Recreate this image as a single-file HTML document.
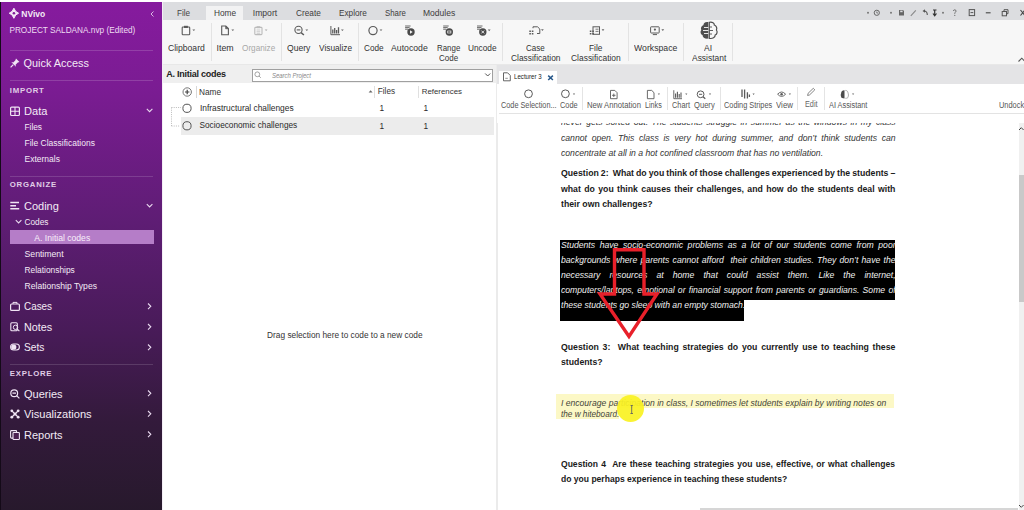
<!DOCTYPE html><html><head><meta charset="utf-8"><style>
html,body{margin:0;padding:0;width:1024px;height:510px;overflow:hidden;background:#fff;font-family:"Liberation Sans", sans-serif;}
.t{position:absolute;white-space:pre;line-height:normal;}
.r{position:absolute;}
svg.ov{position:absolute;left:0;top:0;}
</style></head><body>
<div class="r" style="left:0px;top:0px;width:1024px;height:2px;background:#ffffff;"></div>
<div class="r" style="left:0px;top:2px;width:163px;height:508px;background:linear-gradient(180deg,#861b9e 0px,#7a1c92 90px,#5e1d74 220px,#481b58 330px,#331a3b 420px,#27192c 510px);"></div>
<div class="r" style="left:0px;top:2px;width:1px;height:508px;background:#140a18;"></div>
<div class="r" style="left:162px;top:2px;width:1px;height:508px;background:#f4eef6;"></div>
<div class="t" style="left:21.30px;top:8.61px;font-size:8.5px;color:#f3eaf5;font-weight:bold;font-style:normal;">NVivo</div>
<div class="t" style="left:9.40px;top:26.23px;font-size:8.25px;color:#eedcf2;font-weight:normal;font-style:normal;">PROJECT SALDANA.nvp (Edited)</div>
<div class="r" style="left:10px;top:50px;width:143px;height:1px;background:rgba(255,255,255,0.16);"></div>
<div class="t" style="left:23.50px;top:57.04px;font-size:10.9px;color:#f3eaf5;font-weight:normal;font-style:normal;">Quick Access</div>
<div class="r" style="left:10px;top:80px;width:143px;height:1px;background:rgba(255,255,255,0.16);"></div>
<div class="t" style="left:9.80px;top:85.94px;font-size:7.8px;color:#e0cde6;font-weight:bold;font-style:normal;letter-spacing:0.75px;">IMPORT</div>
<div class="t" style="left:24.00px;top:105.15px;font-size:11.1px;color:#f3eaf5;font-weight:normal;font-style:normal;">Data</div>
<div class="t" style="left:24.50px;top:122.09px;font-size:8.3px;color:#f3eaf5;font-weight:normal;font-style:normal;">Files</div>
<div class="t" style="left:24.50px;top:137.91px;font-size:8.5px;color:#f3eaf5;font-weight:normal;font-style:normal;">File Classifications</div>
<div class="t" style="left:24.50px;top:153.91px;font-size:8.5px;color:#f3eaf5;font-weight:normal;font-style:normal;">Externals</div>
<div class="r" style="left:10px;top:176px;width:143px;height:1px;background:rgba(255,255,255,0.15);"></div>
<div class="t" style="left:9.80px;top:180.44px;font-size:7.8px;color:#e0cde6;font-weight:bold;font-style:normal;letter-spacing:0.75px;">ORGANIZE</div>
<div class="t" style="left:24.00px;top:199.74px;font-size:11.0px;color:#f3eaf5;font-weight:normal;font-style:normal;">Coding</div>
<div class="t" style="left:24.50px;top:216.99px;font-size:8.3px;color:#f3eaf5;font-weight:normal;font-style:normal;">Codes</div>
<div class="r" style="left:10px;top:230px;width:144px;height:14px;background:#b57dc8;"></div>
<div class="t" style="left:34.30px;top:233.12px;font-size:8.6px;color:#f8f0fa;font-weight:normal;font-style:normal;">A. Initial codes</div>
<div class="t" style="left:24.50px;top:248.73px;font-size:8.7px;color:#f3eaf5;font-weight:normal;font-style:normal;">Sentiment</div>
<div class="t" style="left:24.50px;top:265.20px;font-size:8.4px;color:#f3eaf5;font-weight:normal;font-style:normal;">Relationships</div>
<div class="t" style="left:24.50px;top:280.82px;font-size:8.6px;color:#f3eaf5;font-weight:normal;font-style:normal;">Relationship Types</div>
<div class="t" style="left:24.00px;top:300.35px;font-size:11.0px;color:#f3eaf5;font-weight:normal;font-style:normal;transform:scaleX(0.898);transform-origin:0 0;">Cases</div>
<div class="t" style="left:24.00px;top:321.13px;font-size:10.8px;color:#f3eaf5;font-weight:normal;font-style:normal;">Notes</div>
<div class="t" style="left:23.50px;top:341.15px;font-size:11.0px;color:#f3eaf5;font-weight:normal;font-style:normal;transform:scaleX(0.93);transform-origin:0 0;">Sets</div>
<div class="r" style="left:10px;top:364px;width:143px;height:1px;background:rgba(255,255,255,0.14);"></div>
<div class="t" style="left:9.80px;top:368.74px;font-size:7.8px;color:#e0cde6;font-weight:bold;font-style:normal;letter-spacing:0.75px;">EXPLORE</div>
<div class="t" style="left:24.00px;top:387.75px;font-size:11.0px;color:#f3eaf5;font-weight:normal;font-style:normal;">Queries</div>
<div class="t" style="left:24.00px;top:408.25px;font-size:11.1px;color:#f3eaf5;font-weight:normal;font-style:normal;">Visualizations</div>
<div class="t" style="left:24.00px;top:428.94px;font-size:11.0px;color:#f3eaf5;font-weight:normal;font-style:normal;">Reports</div>
<div class="r" style="left:163px;top:2px;width:861px;height:17.8px;background:#dcdde0;"></div>
<div class="r" style="left:206px;top:6px;width:37px;height:14px;background:#f2f2f3;"></div>
<div class="t" style="left:177.20px;top:7.82px;font-size:8.6px;color:#444;font-weight:normal;font-style:normal;transform:scaleX(0.95);transform-origin:0 0;">File</div>
<div class="t" style="left:213.70px;top:8.12px;font-size:8.6px;color:#3c3c3c;font-weight:normal;font-style:normal;transform:scaleX(0.965);transform-origin:0 0;">Home</div>
<div class="t" style="left:252.80px;top:8.12px;font-size:8.6px;color:#3c3c3c;font-weight:normal;font-style:normal;">Import</div>
<div class="t" style="left:295.70px;top:8.12px;font-size:8.6px;color:#3c3c3c;font-weight:normal;font-style:normal;transform:scaleX(0.96);transform-origin:0 0;">Create</div>
<div class="t" style="left:338.70px;top:8.12px;font-size:8.6px;color:#3c3c3c;font-weight:normal;font-style:normal;transform:scaleX(0.957);transform-origin:0 0;">Explore</div>
<div class="t" style="left:384.80px;top:8.12px;font-size:8.6px;color:#3c3c3c;font-weight:normal;font-style:normal;transform:scaleX(0.91);transform-origin:0 0;">Share</div>
<div class="t" style="left:423.20px;top:8.12px;font-size:8.6px;color:#3c3c3c;font-weight:normal;font-style:normal;transform:scaleX(0.994);transform-origin:0 0;">Modules</div>
<div class="r" style="left:163px;top:20px;width:861px;height:43.5px;background:#f7f7f7;"></div>
<div class="r" style="left:163px;top:63.5px;width:861px;height:1.5px;background:#e8e8e8;"></div>
<div class="r" style="left:210.5px;top:23px;width:1px;height:37.5px;background:#e3e3e3;"></div>
<div class="r" style="left:280.5px;top:23px;width:1px;height:37.5px;background:#e3e3e3;"></div>
<div class="r" style="left:357.8px;top:23px;width:1px;height:37.5px;background:#e3e3e3;"></div>
<div class="r" style="left:502.4px;top:23px;width:1px;height:37.5px;background:#e3e3e3;"></div>
<div class="r" style="left:627.6px;top:23px;width:1px;height:37.5px;background:#e3e3e3;"></div>
<div class="r" style="left:683px;top:23px;width:1px;height:37.5px;background:#e3e3e3;"></div>
<div class="r" style="left:732px;top:23px;width:1px;height:37.5px;background:#e3e3e3;"></div>
<div class="t" style="left:168.20px;top:42.74px;font-size:8.8px;color:#333;font-weight:normal;font-style:normal;transform:scaleX(0.9773);transform-origin:0 0;">Clipboard</div>
<div class="t" style="left:216.60px;top:42.74px;font-size:8.8px;color:#333;font-weight:normal;font-style:normal;">Item</div>
<div class="t" style="left:242.00px;top:42.74px;font-size:8.8px;color:#a8a8a8;font-weight:normal;font-style:normal;transform:scaleX(0.9318);transform-origin:0 0;">Organize</div>
<div class="t" style="left:287.30px;top:42.74px;font-size:8.8px;color:#333;font-weight:normal;font-style:normal;transform:scaleX(0.9773);transform-origin:0 0;">Query</div>
<div class="t" style="left:319.20px;top:42.74px;font-size:8.8px;color:#333;font-weight:normal;font-style:normal;transform:scaleX(0.9432);transform-origin:0 0;">Visualize</div>
<div class="t" style="left:363.70px;top:42.74px;font-size:8.8px;color:#333;font-weight:normal;font-style:normal;transform:scaleX(0.9318);transform-origin:0 0;">Code</div>
<div class="t" style="left:391.40px;top:42.74px;font-size:8.8px;color:#333;font-weight:normal;font-style:normal;transform:scaleX(0.9886);transform-origin:0 0;">Autocode</div>
<div class="t" style="left:436.90px;top:42.74px;font-size:8.8px;color:#333;font-weight:normal;font-style:normal;transform:scaleX(0.8977);transform-origin:0 0;">Range</div>
<div class="t" style="left:439.00px;top:52.64px;font-size:8.8px;color:#333;font-weight:normal;font-style:normal;transform:scaleX(0.9091);transform-origin:0 0;">Code</div>
<div class="t" style="left:468.20px;top:42.74px;font-size:8.8px;color:#333;font-weight:normal;font-style:normal;transform:scaleX(0.9432);transform-origin:0 0;">Uncode</div>
<div class="t" style="left:525.60px;top:42.74px;font-size:8.8px;color:#333;font-weight:normal;font-style:normal;transform:scaleX(0.9091);transform-origin:0 0;">Case</div>
<div class="t" style="left:511.00px;top:52.64px;font-size:8.8px;color:#333;font-weight:normal;font-style:normal;transform:scaleX(0.9545);transform-origin:0 0;">Classification</div>
<div class="t" style="left:589.00px;top:42.74px;font-size:8.8px;color:#333;font-weight:normal;font-style:normal;transform:scaleX(0.9432);transform-origin:0 0;">File</div>
<div class="t" style="left:571.30px;top:52.64px;font-size:8.8px;color:#333;font-weight:normal;font-style:normal;transform:scaleX(0.9602);transform-origin:0 0;">Classification</div>
<div class="t" style="left:634.30px;top:42.74px;font-size:8.8px;color:#333;font-weight:normal;font-style:normal;transform:scaleX(0.9886);transform-origin:0 0;">Workspace</div>
<div class="t" style="left:704.00px;top:42.74px;font-size:8.8px;color:#333;font-weight:normal;font-style:normal;transform:scaleX(0.9659);transform-origin:0 0;">AI</div>
<div class="t" style="left:691.60px;top:52.64px;font-size:8.8px;color:#333;font-weight:normal;font-style:normal;transform:scaleX(0.9602);transform-origin:0 0;">Assistant</div>
<div class="r" style="left:163px;top:65px;width:333px;height:445px;background:#ffffff;"></div>
<div class="r" style="left:163px;top:65px;width:333px;height:18px;background:#efefef;"></div>
<div class="t" style="left:166.20px;top:68.86px;font-size:9.0px;color:#222;font-weight:bold;font-style:normal;letter-spacing:-0.25px;">A. Initial codes</div>
<div class="r" style="left:251.5px;top:68.5px;width:241px;height:13px;background:#fff;border:1px solid #a0a0a0;box-sizing:border-box;"></div>
<div class="t" style="left:271.60px;top:72.23px;font-size:6.6px;color:#888;font-weight:normal;font-style:italic;transform:scaleX(0.9);transform-origin:0 0;">Search Project</div>
<div class="r" style="left:196px;top:85.5px;width:1px;height:12.5px;background:#d8d8d8;"></div>
<div class="t" style="left:199.00px;top:87.09px;font-size:8.3px;color:#333;font-weight:normal;font-style:normal;">Name</div>
<div class="r" style="left:374.3px;top:85.5px;width:1px;height:12.5px;background:#e0e0e0;"></div>
<div class="t" style="left:377.80px;top:87.18px;font-size:8.2px;color:#333;font-weight:normal;font-style:normal;">Files</div>
<div class="r" style="left:418.2px;top:85.5px;width:1px;height:12.5px;background:#e0e0e0;"></div>
<div class="t" style="left:421.70px;top:87.45px;font-size:7.9px;color:#333;font-weight:normal;font-style:normal;">References</div>
<div class="t" style="left:200.00px;top:103.20px;font-size:8.4px;color:#2a2a2a;font-weight:normal;font-style:normal;">Infrastructural challenges</div>
<div class="t" style="left:379.50px;top:103.29px;font-size:8.3px;color:#2a2a2a;font-weight:normal;font-style:normal;">1</div>
<div class="t" style="left:423.50px;top:103.29px;font-size:8.3px;color:#2a2a2a;font-weight:normal;font-style:normal;">1</div>
<div class="r" style="left:180.7px;top:117px;width:313px;height:17.5px;background:#ececec;"></div>
<div class="t" style="left:199.50px;top:121.43px;font-size:8.25px;color:#2a2a2a;font-weight:normal;font-style:normal;">Socioeconomic challenges</div>
<div class="t" style="left:379.50px;top:121.39px;font-size:8.3px;color:#2a2a2a;font-weight:normal;font-style:normal;">1</div>
<div class="t" style="left:423.50px;top:121.39px;font-size:8.3px;color:#2a2a2a;font-weight:normal;font-style:normal;">1</div>
<div class="t" style="left:267.10px;top:329.79px;font-size:8.3px;color:#333;font-weight:normal;font-style:normal;">Drag selection here to code to a new code</div>
<div class="r" style="left:495.6px;top:65px;width:2.6px;height:445px;background:#ebebeb;"></div>
<div class="r" style="left:497px;top:65px;width:527px;height:18.6px;background:#e4e4e6;"></div>
<div class="r" style="left:499px;top:70.5px;width:58px;height:13.1px;background:#ffffff;"></div>
<div class="t" style="left:514.10px;top:72.66px;font-size:6.9px;color:#1a1a1a;font-weight:normal;font-style:normal;transform:scaleX(0.89);transform-origin:0 0;">Lecturer 3</div>
<div class="r" style="left:497px;top:83.6px;width:527px;height:30px;background:#ffffff;"></div>
<div class="r" style="left:582px;top:86.5px;width:1px;height:23px;background:#e4e4e4;"></div>
<div class="r" style="left:667.2px;top:86.5px;width:1px;height:23px;background:#e4e4e4;"></div>
<div class="r" style="left:719.6px;top:86.5px;width:1px;height:23px;background:#e4e4e4;"></div>
<div class="r" style="left:797.4px;top:86.5px;width:1px;height:23px;background:#e4e4e4;"></div>
<div class="r" style="left:824.4px;top:86.5px;width:1px;height:23px;background:#e4e4e4;"></div>
<div class="r" style="left:499px;top:113.3px;width:525px;height:1px;background:#e3e3e3;"></div>
<div class="t" style="left:500.90px;top:100.49px;font-size:8.3px;color:#555;font-weight:normal;font-style:normal;transform:scaleX(0.8795);transform-origin:0 0;">Code Selection...</div>
<div class="t" style="left:560.40px;top:100.49px;font-size:8.3px;color:#555;font-weight:normal;font-style:normal;transform:scaleX(0.8916);transform-origin:0 0;">Code</div>
<div class="t" style="left:586.80px;top:100.49px;font-size:8.3px;color:#555;font-weight:normal;font-style:normal;transform:scaleX(0.9277);transform-origin:0 0;">New Annotation</div>
<div class="t" style="left:645.40px;top:100.49px;font-size:8.3px;color:#555;font-weight:normal;font-style:normal;transform:scaleX(0.8675);transform-origin:0 0;">Links</div>
<div class="t" style="left:671.80px;top:100.49px;font-size:8.3px;color:#555;font-weight:normal;font-style:normal;transform:scaleX(0.8916);transform-origin:0 0;">Chart</div>
<div class="t" style="left:694.00px;top:100.49px;font-size:8.3px;color:#555;font-weight:normal;font-style:normal;transform:scaleX(0.9157);transform-origin:0 0;">Query</div>
<div class="t" style="left:724.00px;top:100.49px;font-size:8.3px;color:#555;font-weight:normal;font-style:normal;transform:scaleX(0.8855);transform-origin:0 0;">Coding Stripes</div>
<div class="t" style="left:776.00px;top:100.49px;font-size:8.3px;color:#555;font-weight:normal;font-style:normal;transform:scaleX(0.9518);transform-origin:0 0;">View</div>
<div class="t" style="left:804.60px;top:99.29px;font-size:8.3px;color:#666;font-weight:normal;font-style:normal;transform:scaleX(0.8795);transform-origin:0 0;">Edit</div>
<div class="t" style="left:828.80px;top:100.49px;font-size:8.3px;color:#555;font-weight:normal;font-style:normal;transform:scaleX(0.8855);transform-origin:0 0;">AI Assistant</div>
<div class="t" style="left:998.80px;top:100.49px;font-size:8.3px;color:#555;font-weight:normal;font-style:normal;transform:scaleX(0.8916);transform-origin:0 0;">Undock</div>
<div class="t" style="left:560.50px;top:116.31px;font-size:9.6px;color:#333333;font-weight:normal;font-style:italic;transform:scaleX(0.9);transform-origin:0 0;word-spacing:1.302px;">never gets sorted out. The students struggle in summer as the windows in my class</div>
<div class="r" style="left:497px;top:113.8px;width:521px;height:9.2px;background:#ffffff;"></div>
<div class="r" style="left:499px;top:113.3px;width:519px;height:1px;background:#e3e3e3;"></div>
<div class="t" style="left:560.50px;top:131.51px;font-size:9.6px;color:#333333;font-weight:normal;font-style:italic;transform:scaleX(0.9);transform-origin:0 0;word-spacing:2.591px;">cannot open. This class is very hot during summer, and don’t think students can</div>
<div class="t" style="left:560.50px;top:146.51px;font-size:9.6px;color:#333333;font-weight:normal;font-style:italic;transform:scaleX(0.9);transform-origin:0 0;">concentrate at all in a hot confined classroom that has no ventilation.</div>
<div class="t" style="left:560.50px;top:167.22px;font-size:9.7px;color:#1a1a1a;font-weight:bold;font-style:normal;transform:scaleX(0.9);transform-origin:0 0;word-spacing:-0.416px;">Question 2:  What do you think of those challenges experienced by the students –</div>
<div class="t" style="left:560.50px;top:182.52px;font-size:9.7px;color:#1a1a1a;font-weight:bold;font-style:normal;transform:scaleX(0.9);transform-origin:0 0;word-spacing:1.045px;">what do you think causes their challenges, and how do the students deal with</div>
<div class="t" style="left:560.50px;top:197.72px;font-size:9.7px;color:#1a1a1a;font-weight:bold;font-style:normal;transform:scaleX(0.9);transform-origin:0 0;">their own challenges?</div>
<div class="r" style="left:560.2px;top:240.2px;width:335px;height:60.2px;background:#000;"></div>
<div class="r" style="left:560.2px;top:300px;width:183.7px;height:20.6px;background:#000;"></div>
<div class="t" style="left:560.50px;top:239.31px;font-size:9.6px;color:#f0f0f0;font-weight:normal;font-style:italic;transform:scaleX(0.9);transform-origin:0 0;word-spacing:2.452px;">Students have socio-economic problems as a lot of our students come from poor</div>
<div class="t" style="left:560.50px;top:254.31px;font-size:9.6px;color:#f0f0f0;font-weight:normal;font-style:italic;transform:scaleX(0.9);transform-origin:0 0;word-spacing:0.981px;">backgrounds where parents cannot afford  their children studies. They don’t have the</div>
<div class="t" style="left:560.50px;top:269.31px;font-size:9.6px;color:#f0f0f0;font-weight:normal;font-style:italic;transform:scaleX(0.9);transform-origin:0 0;word-spacing:7.425px;">necessary resources at home that could assist them. Like the internet,</div>
<div class="t" style="left:560.50px;top:284.01px;font-size:9.6px;color:#f0f0f0;font-weight:normal;font-style:italic;transform:scaleX(0.9);transform-origin:0 0;word-spacing:0.914px;">computers/laptops, emotional or financial support from parents or guardians. Some of</div>
<div class="t" style="left:560.50px;top:299.11px;font-size:9.6px;color:#f0f0f0;font-weight:normal;font-style:italic;transform:scaleX(0.9);transform-origin:0 0;">these students go sleep with an empty stomach.</div>
<div class="t" style="left:560.50px;top:341.22px;font-size:9.7px;color:#1a1a1a;font-weight:bold;font-style:normal;transform:scaleX(0.9);transform-origin:0 0;word-spacing:1.490px;">Question 3:  What teaching strategies do you currently use to teaching these</div>
<div class="t" style="left:560.50px;top:356.22px;font-size:9.7px;color:#1a1a1a;font-weight:bold;font-style:normal;transform:scaleX(0.9);transform-origin:0 0;">students?</div>
<div class="r" style="left:556px;top:394.4px;width:337.6px;height:13.8px;background:#fcf8c6;"></div>
<div class="r" style="left:556px;top:408px;width:62.6px;height:11.2px;background:#fcf8c6;"></div>
<div class="t" style="left:560.80px;top:398.36px;font-size:9.1px;color:#45453a;font-weight:normal;font-style:italic;transform:scaleX(0.942);transform-origin:0 0;">I encourage participation in class, I sometimes let students explain by writing notes on</div>
<div class="t" style="left:560.80px;top:408.76px;font-size:9.1px;color:#45453a;font-weight:normal;font-style:italic;transform:scaleX(0.9);transform-origin:0 0;">the w hiteboard.</div>
<div class="t" style="left:560.50px;top:457.80px;font-size:9.5px;color:#1a1a1a;font-weight:bold;font-style:normal;transform:scaleX(0.9);transform-origin:0 0;word-spacing:0.950px;">Question 4  Are these teaching strategies you use, effective, or what challenges</div>
<div class="t" style="left:560.50px;top:473.30px;font-size:9.5px;color:#1a1a1a;font-weight:bold;font-style:normal;transform:scaleX(0.9);transform-origin:0 0;">do you perhaps experience in teaching these students?</div>
<div class="r" style="left:1018.5px;top:123.3px;width:5.5px;height:386.7px;background:#f0f0f0;"></div>
<div class="r" style="left:1018.5px;top:175px;width:5.5px;height:127.2px;background:#c9c9c9;"></div>
<div class="r" style="left:700px;top:508px;width:318px;height:2px;background:#d6d6d6;"></div>
<svg class="ov" width="1024" height="510" viewBox="0 0 1024 510"><path d="M13.9 8.2 L15.7 11.4 L18.6 13.2 L15.7 15 L13.9 18.3 L12.1 15 L9.2 13.2 L12.1 11.4 Z" fill="#f3e6f6" stroke="#f3e6f6" stroke-width="1" stroke-linejoin="round"/><circle cx="13.9" cy="13.2" r="1.3" fill="#801b98"/><path d="M153.5 11.5 L151 14 L153.5 16.5" fill="none" stroke="#d9b8e2" stroke-width="1"/><path d="M16 58.5 L19.5 62 L17.8 62.6 L15.6 64.8 L15.9 66.7 L11.3 62.1 L13.2 62.4 L15.4 60.2 Z" fill="#f0e4f4"/><path d="M13.3 64.7 L10.6 67.4" stroke="#f0e4f4" stroke-width="1.2"/><rect x="10.6" y="107.1" width="8.8" height="8.4" rx="1" fill="none" stroke="#f0e4f4" stroke-width="1.2"/><path d="M10.6 111.3 H19.4 M15 107.1 V115.5" stroke="#f0e4f4" stroke-width="1.1"/><path d="M146.8 108.8 L149.60000000000002 111.6 L152.4 108.8" fill="none" stroke="#e8d8ee" stroke-width="1.1"/><path d="M10.3 202.6 H19 M10.3 205.7 H16 M10.3 208.8 H19.2" stroke="#f0e4f4" stroke-width="1.5"/><path d="M146.8 204.2 L149.60000000000002 207.0 L152.4 204.2" fill="none" stroke="#e8d8ee" stroke-width="1.1"/><path d="M15.8 220.2 L18.6 223.0 L21.4 220.2" fill="none" stroke="#e8d8ee" stroke-width="1.1"/><rect x="10.6" y="304" width="8.8" height="6.4" rx="1" fill="none" stroke="#f0e4f4" stroke-width="1.2"/><path d="M13 304 V302.4 H17 V304" fill="none" stroke="#f0e4f4" stroke-width="1"/><path d="M148 303.5 L150.8 306.3 L148 309.1" fill="none" stroke="#e8d8ee" stroke-width="1.1"/><rect x="10.8" y="322.8" width="6.5" height="8" rx="1" fill="none" stroke="#f0e4f4" stroke-width="1.1"/><circle cx="15.5" cy="327.3" r="2.2" fill="none" stroke="#f0e4f4" stroke-width="1"/><path d="M17 328.8 L19.4 331.2" stroke="#f0e4f4" stroke-width="1.1"/><path d="M148 324 L150.8 326.8 L148 329.6" fill="none" stroke="#e8d8ee" stroke-width="1.1"/><rect x="10.6" y="344" width="8.8" height="6" rx="3" fill="none" stroke="#f0e4f4" stroke-width="1.1"/><circle cx="13.8" cy="347" r="2.6" fill="#f0e4f4"/><path d="M148 344.5 L150.8 347.3 L148 350.1" fill="none" stroke="#e8d8ee" stroke-width="1.1"/><circle cx="14.2" cy="393.2" r="3.4" fill="none" stroke="#f0e4f4" stroke-width="1.2"/><path d="M12.4 393.2 H16 M16.8 395.8 L19.4 398.4" stroke="#f0e4f4" stroke-width="1.2"/><path d="M148 390.5 L150.8 393.3 L148 396.1" fill="none" stroke="#e8d8ee" stroke-width="1.1"/><path d="M12 411 L18 417 M18 411 L12 417" stroke="#f0e4f4" stroke-width="1.2"/><circle cx="11.8" cy="410.8" r="1.4" fill="#f0e4f4"/><circle cx="18.2" cy="410.8" r="1.4" fill="#f0e4f4"/><circle cx="11.8" cy="417.2" r="1.4" fill="#f0e4f4"/><circle cx="18.2" cy="417.2" r="1.4" fill="#f0e4f4"/><circle cx="15" cy="414" r="1.5" fill="#f0e4f4"/><path d="M148 411 L150.8 413.8 L148 416.6" fill="none" stroke="#e8d8ee" stroke-width="1.1"/><rect x="10.6" y="430.6" width="6" height="7.5" rx="0.8" fill="none" stroke="#f0e4f4" stroke-width="1.1"/><rect x="13" y="432.5" width="6.4" height="7" rx="0.8" fill="#4a2050" stroke="#f0e4f4" stroke-width="1.1"/><path d="M148 431.5 L150.8 434.3 L148 437.1" fill="none" stroke="#e8d8ee" stroke-width="1.1"/><circle cx="868" cy="12.8" r="1" fill="#777"/><circle cx="876.8" cy="12.8" r="2.6" fill="none" stroke="#666" stroke-width="1"/><path d="M876.8 11.5 V13 H878" stroke="#666" stroke-width="0.8" fill="none"/><circle cx="891" cy="12.8" r="1" fill="#777"/><path d="M899 10 H903 L904 11 V15.5 H899 Z" fill="#666"/><rect x="900.2" y="10.6" width="2.4" height="1.6" fill="#dcdde0"/><path d="M910.8 15.8 L915.8 10.3" stroke="#888" stroke-width="1.1"/><path d="M922.5 11 L925 9.2 V12.8 Z" fill="#555"/><path d="M924 11 Q927.3 11 927.3 15" stroke="#555" stroke-width="1.1" fill="none"/><path d="M933 10 H936.5 M934.7 10 V15.5 M933 13.5 L934.7 15.8 L936.5 13.5" stroke="#333" stroke-width="1.2" fill="none"/><circle cx="943" cy="12.8" r="1" fill="#777"/><path d="M953.3 11 Q953.6 9.8 954.8 9.8 Q956.2 9.9 956 11.3 Q955.7 12.3 954.8 12.7 V13.8" stroke="#666" stroke-width="0.9" fill="none"/><circle cx="954.8" cy="15.4" r="0.55" fill="#666"/><rect x="969.2" y="9.6" width="5.4" height="6" fill="none" stroke="#555" stroke-width="1"/><path d="M970.5 12.6 H973.3" stroke="#555" stroke-width="1"/><path d="M985.8 12.8 H990.6" stroke="#444" stroke-width="1.1"/><rect x="1002.2" y="11.5" width="4.3" height="4.3" fill="none" stroke="#555" stroke-width="1"/><path d="M1004 11.5 V9.7 H1008 V13.7 H1006.5" fill="none" stroke="#555" stroke-width="1"/><path d="M1020.5 10 L1025 15.5 M1025 10 L1020.5 15.5" stroke="#444" stroke-width="1.1"/><rect x="182.2" y="27" width="7.5" height="7.7" rx="0.8" stroke="#5a5a5a" stroke-width="1.1" fill="none"/><rect x="184" y="25.8" width="3.9" height="2.2" fill="#5a5a5a"/><path d="M192.4 29.4 h2.8 l-1.4 1.7 z" fill="#666"/><path d="M221.7 26 H225.8 L228.4 28.6 V34.7 H221.7 Z" stroke="#5a5a5a" stroke-width="1.1" fill="none"/><path d="M225.6 26.1 V28.8 H228.3" fill="#5a5a5a" stroke="#5a5a5a" stroke-width="0.6"/><path d="M231.4 29.4 h2.8 l-1.4 1.7 z" fill="#666"/><rect x="254.8" y="27.4" width="7.2" height="7.2" rx="0.8" stroke="#bbb" stroke-width="1.1" fill="none"/><rect x="256.6" y="26.2" width="3.6" height="2" fill="#bbb"/><path d="M256.6 30 H260.2 M256.6 31.7 H260.2 M256.6 33.3 H260.2" stroke="#bbb" stroke-width="0.7"/><path d="M264.7 29.4 h2.8 l-1.4 1.7 z" fill="#aaa"/><circle cx="298.5" cy="29.9" r="3.6" stroke="#5a5a5a" stroke-width="1.1" fill="none"/><path d="M296.7 29.9 H300.3" stroke="#5a5a5a" stroke-width="1.1" fill="none"/><path d="M301.1 32.6 L303.9 35" stroke="#5a5a5a" stroke-width="1.4"/><path d="M305.4 29.4 h2.8 l-1.4 1.7 z" fill="#666"/><path d="M330.9 26 V34.7 H340" stroke="#5a5a5a" stroke-width="1" fill="none"/><path d="M332.8 29.5 V33.6 M334.7 28 V33.6 M336.6 30 V33.6 M338.5 27.2 V33.6" stroke="#5a5a5a" stroke-width="1.3"/><path d="M341 29.4 h2.8 l-1.4 1.7 z" fill="#666"/><circle cx="373" cy="30.6" r="4.1" stroke="#5a5a5a" stroke-width="1.2" fill="none"/><path d="M379.6 29.4 h2.8 l-1.4 1.7 z" fill="#666"/><path d="M405.1 26 H410.6 M405.1 27.6 H409.6 M405.1 29.2 H408.1" stroke="#5a5a5a" stroke-width="0.9"/><circle cx="411" cy="32" r="3.7" fill="#4a4a4a"/><path d="M410 30.2 L412.7 32 L410 33.8 Z" fill="#f7f7f7"/><path d="M443.2 26 H448.7 M443.2 27.6 H447.7 M443.2 29.2 H446.2" stroke="#5a5a5a" stroke-width="0.9"/><circle cx="449.3" cy="32" r="3.7" fill="#4a4a4a"/><rect x="447.7" y="31" width="3.2" height="2" fill="none" stroke="#f7f7f7" stroke-width="0.7"/><path d="M477 26 H482.5 M477 27.6 H481.5 M477 29.2 H480" stroke="#5a5a5a" stroke-width="0.9"/><circle cx="482.8" cy="32" r="3.7" fill="#4a4a4a"/><path d="M481.4 30.6 L484.2 33.4 M484.2 30.6 L481.4 33.4" stroke="#f7f7f7" stroke-width="0.9"/><path d="M487.8 29.6 h2.8 l-1.4 1.7 z" fill="#666"/><path d="M533 28.2 V26.8 H537.5 L539.8 29 V33.5 H537" stroke="#5a5a5a" stroke-width="1" fill="none"/><path d="M529.3 30.4 h1.6v1.6h-1.6z M531.8 30.4 h1.6v1.6h-1.6z M529.3 32.9 h1.6v1.6h-1.6z M531.8 32.9 h1.6v1.6h-1.6z" fill="#5a5a5a"/><path d="M541 29.2 h2.8 l-1.4 1.7 z" fill="#666"/><rect x="593" y="26.8" width="6.5" height="7.5" stroke="#5a5a5a" stroke-width="1" fill="none"/><path d="M595.5 29.2 H598.5 M595.5 31.4 H598.5" stroke="#5a5a5a" stroke-width="0.8"/><path d="M589.8 30.4 h1.6v1.6h-1.6z M592.3 30.4 h1.6v1.6h-1.6z M589.8 32.9 h1.6v1.6h-1.6z M592.3 32.9 h1.6v1.6h-1.6z" fill="#5a5a5a"/><path d="M601.6 29.2 h2.8 l-1.4 1.7 z" fill="#666"/><rect x="650.6" y="26.8" width="8.6" height="6.2" rx="0.6" stroke="#5a5a5a" stroke-width="1" fill="none"/><circle cx="654.9" cy="29.6" r="1.1" fill="#5a5a5a"/><path d="M652.8 34.6 H657" stroke="#5a5a5a" stroke-width="1"/><path d="M661.4 29.2 h2.8 l-1.4 1.7 z" fill="#666"/><path d="M708.3 22 C705 21.5 703.3 23 703.5 25 C701 25.8 700.5 28.5 701.3 30 C700 31.5 700.5 34.5 702.5 35 C702.5 37.5 705 39 708.3 38.6 Z" fill="#4e4e4e"/><path d="M709.3 22.3 C712.5 21.8 714.5 23 714.3 25 C716.7 25.8 717.2 28.5 716.4 30 C717.6 31.5 717.2 34.5 715.2 35 C715.2 37.5 712.7 38.9 709.3 38.4 Z" fill="none" stroke="#4e4e4e" stroke-width="1.2"/><path d="M704 27.5 H708.3 M703 30.5 H708.3 M704 33.5 H708.3" stroke="#f7f7f7" stroke-width="0.9"/><path d="M709.3 27 H712 M709.3 30.5 H713 M709.3 34 H712" stroke="#4e4e4e" stroke-width="0.9"/><path d="M1018.5 61.5 L1021.8 58.2 L1025 61.5" stroke="#555" stroke-width="1.1" fill="none"/><circle cx="257.3" cy="74.3" r="2.4" fill="none" stroke="#999" stroke-width="0.9"/><path d="M259 76 L260.8 77.8" stroke="#999" stroke-width="0.9"/><path d="M485.2 73.5 L487.7 76 L490.2 73.5" stroke="#555" stroke-width="1" fill="none"/><circle cx="187.2" cy="92" r="4.2" fill="none" stroke="#666" stroke-width="0.9"/><path d="M187.2 89.8 V94.2 M185 92 H189.4" stroke="#444" stroke-width="1.2"/><path d="M368.6 92.6 L370.6 90.2 L372.6 92.6 Z" fill="#666"/><circle cx="187" cy="108.3" r="4.1" fill="none" stroke="#555" stroke-width="1"/><circle cx="187" cy="125.8" r="4.1" fill="none" stroke="#555" stroke-width="1"/><path d="M171.5 107.5 V126 M171.5 107.5 H181 M171.5 126 H180" stroke="#aaa" stroke-width="0.8" stroke-dasharray="1 1.2" fill="none"/><path d="M503.5 72.8 H507.6 L510.3 75.5 V80.8 H503.5 Z" fill="none" stroke="#555" stroke-width="0.9"/><path d="M505.3 78.3 h2.5" stroke="#777" stroke-width="0.8"/><path d="M548.2 75.6 L552.9 80 M552.9 75.6 L548.2 80" stroke="#2a5a8c" stroke-width="1.5"/><circle cx="528.5" cy="93.8" r="3.9" stroke="#5a5a5a" stroke-width="1" fill="none"/><circle cx="565.4" cy="93.8" r="3.9" stroke="#5a5a5a" stroke-width="1" fill="none"/><path d="M572.9 93.6 h2.2 l-1.1 1.4 z" fill="#666"/><path d="M610.5 90.4 H614.8 L617.1 92.7 V98.7 H610.5 Z" stroke="#5a5a5a" stroke-width="0.9" fill="none"/><path d="M613.8 93.6 V97 M612.1 95.3 H615.5" stroke="#5a5a5a" stroke-width="0.9"/><path d="M647.4 90.4 H651.7 L654 92.7 V98.7 H647.4 Z" stroke="#5a5a5a" stroke-width="0.9" fill="none"/><path d="M657.8 93.6 h2.2 l-1.1 1.4 z" fill="#666"/><path d="M673.8 90.2 V98.7 H682" stroke="#5a5a5a" stroke-width="0.9" fill="none"/><path d="M675.6 93.5 V97.8 M677.4 91.8 V97.8 M679.2 94 V97.8 M681 92.5 V97.8" stroke="#5a5a5a" stroke-width="1.1"/><path d="M685.2 93.6 h2.2 l-1.1 1.4 z" fill="#666"/><circle cx="700.6" cy="94.3" r="3.4" stroke="#5a5a5a" stroke-width="1" fill="none"/><path d="M699 94.3 H702.2" stroke="#5a5a5a" stroke-width="1" fill="none"/><path d="M703 96.8 L705.3 98.8" stroke="#5a5a5a" stroke-width="1.2"/><path d="M708.9 93.6 h2.2 l-1.1 1.4 z" fill="#666"/><path d="M742 89.6 V97 M744.6 89.6 V98.4 M747.4 92.2 V98.4 M749.4 94.5 V97" stroke="#5a5a5a" stroke-width="1.3"/><path d="M752.5 93.6 h2.2 l-1.1 1.4 z" fill="#666"/><path d="M777.6 94.2 Q781.6 89.8 785.6 94.2 Q781.6 98.6 777.6 94.2 Z" stroke="#5a5a5a" stroke-width="0.9" fill="none"/><circle cx="781.6" cy="94.2" r="1.2" fill="#5a5a5a"/><path d="M788.8 93.6 h2.2 l-1.1 1.4 z" fill="#666"/><path d="M807.6 95.5 L808.1 93.3 L813.3 88.3 L814.8 89.8 L809.6 94.9 Z" stroke="#777" stroke-width="0.9" fill="none"/><path d="M844.5 90.2 C842 90.2 841 92 841.2 93 C840.6 94 840.6 96 841.2 97 C841.2 98 842.5 98.4 844.5 98.4 Z" fill="#4a4a4a"/><path d="M845.3 90.4 C847.5 90.4 848 92 848 93 C848.6 94 848.6 96 848 97 C848 98 847 98.3 845.3 98.3" stroke="#999" stroke-width="0.8" fill="none"/><path d="M852 93.6 h2.2 l-1.1 1.4 z" fill="#666"/><path d="M614.5 249.7 H644 V294 H657 L629 336.5 L600 294 H614.5 Z" fill="none" stroke="#e8202a" stroke-width="3.4" stroke-linejoin="miter"/><path d="M1019 130 L1021.3 127.7 L1023.6 130" stroke="#444" stroke-width="1" fill="none"/><path d="M1019 505 L1021.3 507.3 L1023.6 505" stroke="#444" stroke-width="1" fill="none"/></svg>
<div class="r" style="left:616.7px;top:395.2px;width:27.2px;height:27.2px;border-radius:50%;background:rgba(250,242,35,0.93);"></div>
<svg class="ov" width="1024" height="510" viewBox="0 0 1024 510"><path d="M630.6 405.5 H632.8 M631.7 405.5 V413.5 M630.4 413.5 H633" stroke="#556" stroke-width="0.8" fill="none"/></svg>
</body></html>
